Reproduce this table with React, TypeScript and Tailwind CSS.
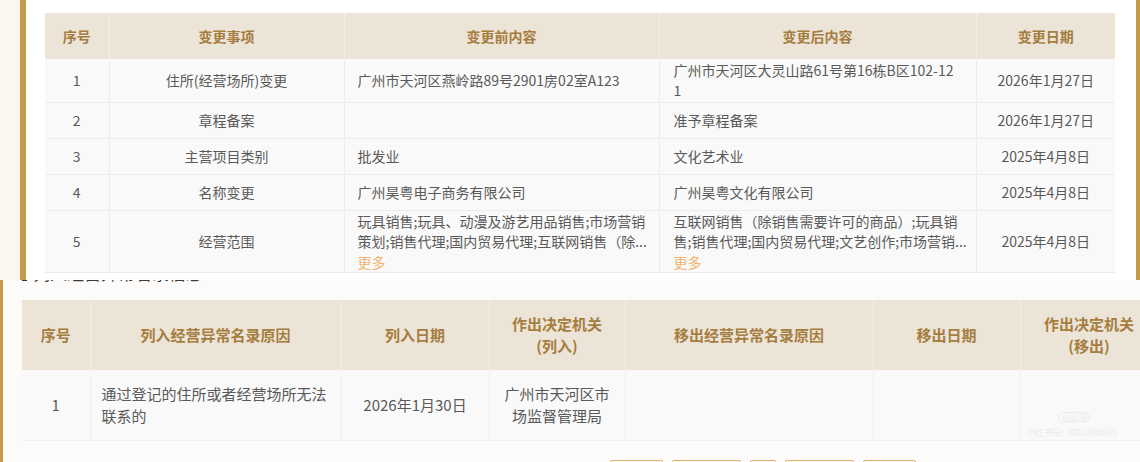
const changes = [
  {
    no: "1",
    item: "住所(经营场所)变更",
    before: ["广州市天河区燕岭路89号2901房02室A123"],
    after: ["广州市天河区大灵山路61号第16栋B区102-12", "1"],
    date: "2026年1月27日",
    h: "h-[43px]",
  },
  { no: "2", item: "章程备案", before: [], after: ["准予章程备案"], date: "2026年1月27日", h: "h-[36px]" },
  { no: "3", item: "主营项目类别", before: ["批发业"], after: ["文化艺术业"], date: "2025年4月8日", h: "h-[36px]" },
  {
    no: "4",
    item: "名称变更",
    before: ["广州昊粤电子商务有限公司"],
    after: ["广州昊粤文化有限公司"],
    date: "2025年4月8日",
    h: "h-[36px]",
  },
  {
    no: "5",
    item: "经营范围",
    before: ["玩具销售;玩具、动漫及游艺用品销售;市场营销", "策划;销售代理;国内贸易代理;互联网销售（除..."],
    after: ["互联网销售（除销售需要许可的商品）;玩具销", "售;销售代理;国内贸易代理;文艺创作;市场营销..."],
    date: "2025年4月8日",
    h: "h-[62px]",
    more: true,
  },
];

function Lines({ lines, more }: { lines: string[]; more?: boolean }) {
  return (
    <div className="leading-[20.5px]">
      {lines.map((l, i) => (
        <div key={i} className="whitespace-nowrap">
          {l}
        </div>
      ))}
      {more && <div className="text-[#f0b470]">更多</div>}
    </div>
  );
}

function ChangeTable() {
  const th = "border-r border-[#f4efe7] font-bold text-[#a57d3f] text-center";
  const td = "border-r border-b border-[#ececec] align-middle";
  return (
    <table className="table-fixed border-collapse w-[1070px] text-[14px] text-[#595959]">
      <colgroup>
        <col className="w-[64px]" />
        <col className="w-[235px]" />
        <col className="w-[315px]" />
        <col className="w-[317px]" />
        <col className="w-[139px]" />
      </colgroup>
      <thead>
        <tr className="h-[46px] bg-[#ece4d7]">
          <th className={th}>序号</th>
          <th className={th}>变更事项</th>
          <th className={th}>变更前内容</th>
          <th className={th}>变更后内容</th>
          <th className="font-bold text-[#a57d3f] text-center">变更日期</th>
        </tr>
      </thead>
      <tbody className="bg-[#f9f9f9]">
        {changes.map((r) => (
          <tr key={r.no} className={r.h}>
            <td className={td + " text-center"}>{r.no}</td>
            <td className={td + " text-center"}>{r.item}</td>
            <td className={td + " px-[13px]"}>
              <Lines lines={r.before} more={r.more} />
            </td>
            <td className={td + " px-[14px]"}>
              <Lines lines={r.after} more={r.more} />
            </td>
            <td className="border-b border-[#ececec] text-center">{r.date}</td>
          </tr>
        ))}
      </tbody>
    </table>
  );
}

function AbnormalTable() {
  const th = "border-r border-[#f4efe7] font-bold text-[#a57d3f] text-center leading-[22px]";
  const td = "border-r border-b border-[#efefef] align-middle leading-[22px]";
  return (
    <table className="table-fixed border-collapse w-[1136px] text-[15px] text-[#595959]">
      <colgroup>
        <col className="w-[68px]" />
        <col className="w-[251px]" />
        <col className="w-[148px]" />
        <col className="w-[136px]" />
        <col className="w-[248px]" />
        <col className="w-[147px]" />
        <col className="w-[138px]" />
      </colgroup>
      <thead>
        <tr className="h-[70px] bg-[#ece4d7]">
          <th className={th}>序号</th>
          <th className={th}>列入经营异常名录原因</th>
          <th className={th}>列入日期</th>
          <th className={th}>
            作出决定机关
            <br />
            (列入)
          </th>
          <th className={th}>移出经营异常名录原因</th>
          <th className={th}>移出日期</th>
          <th className={th}>
            作出决定机关
            <br />
            (移出)
          </th>
        </tr>
      </thead>
      <tbody className="bg-[#f9f9f9]">
        <tr className="h-[70px]">
          <td className={td + " text-center"}>1</td>
          <td className={td + " px-[11px]"}>
            通过登记的住所或者经营场所无法
            <br />
            联系的
          </td>
          <td className={td + " text-center"}>2026年1月30日</td>
          <td className={td + " text-center"}>
            广州市天河区市
            <br />
            场监督管理局
          </td>
          <td className={td}></td>
          <td className={td}></td>
          <td className={td}></td>
        </tr>
      </tbody>
    </table>
  );
}

export default function App() {
  const pages = ["w-[53px]", "w-[69px]", "w-[26px]", "w-[69px]", "w-[53px]"];
  return (
    <div
      className="relative w-[1140px] h-[462px] overflow-hidden bg-white"
      style={{ fontFamily: '"Noto Sans CJK SC", "Microsoft YaHei", sans-serif' }}
    >
      <div className="flex h-[280px] bg-[#fbf6ee]">
        <div className="w-[20px] shrink-0" />
        <div className="flex-1 bg-white border-l-[6px] border-r-[4px] border-[#c59a48] pt-[13px] pl-[19px]">
          <ChangeTable />
        </div>
      </div>

      <div className="h-[182px] border-l-[3px] border-[#c59a48] bg-[#fcfbf9]">
        {/* section title, mostly hidden under the card above */}
        <div className="h-[5px] overflow-hidden pl-[19px]">
          <div className="-mt-[19px] flex items-center gap-[6px] leading-[24px] text-[17px] text-[#3a3a3a]">
            <span className="inline-block w-[5px] h-[16px] bg-[#333]" />
            列入经营异常名录信息
          </div>
        </div>
        <div className="pt-[15px] pl-[19px]">
          <AbnormalTable />
        </div>
        <div className="flex gap-[9px] pl-[607px] pt-[19px]">
          {pages.map((w, i) => (
            <div key={i} className={w + " h-[22px] shrink-0 border border-[#deb06c] rounded-[2px] bg-[#fdf8f0]"} />
          ))}
        </div>
      </div>

      <div className="absolute left-[1026px] top-[412px] flex flex-col items-end text-[#ebebeb] leading-none">
        <span className="mr-[26px] rounded-full border border-[#ebebeb] px-[3px] text-[8px]">小红书</span>
        <span className="mt-[6px] text-[9px] whitespace-nowrap">小红书号: 4001390835</span>
      </div>
    </div>
  );
}
